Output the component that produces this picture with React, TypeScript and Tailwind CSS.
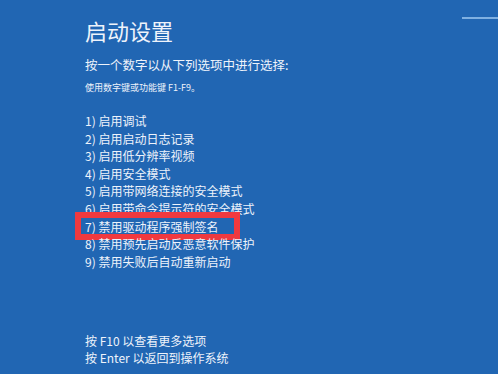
const options = [
  "1) 启用调试",
  "2) 启用启动日志记录",
  "3) 启用低分辨率视频",
  "4) 启用安全模式",
  "5) 启用带网络连接的安全模式",
  "6) 启用带命令提示符的安全模式",
  "7) 禁用驱动程序强制签名",
  "8) 禁用预先启动反恶意软件保护",
  "9) 禁用失败后自动重新启动",
];

export default function App() {
  return (
    <div
      className="relative w-[498px] h-[374px] overflow-hidden bg-[#2166b3] text-[#eef3fb]"
      style={{ fontFamily: '"Noto Sans CJK SC", "Noto Sans", sans-serif' }}
    >
      {/* faint line at top right */}
      <div className="absolute right-0 top-[17px] w-[36px] h-[2px] bg-[#7fb0e2]" />

      <div className="flex flex-col pl-[85px] pt-[17px]">
        <h1 className="text-[22px] leading-[27px] font-normal">启动设置</h1>
        <p className="mt-[12px] text-[12.5px] leading-[18px]">按一个数字以从下列选项中进行选择:</p>
        <p className="mt-[8px] text-[9px] leading-[12px]">使用数字键或功能键 F1-F9。</p>

        <ul className="mt-[18px] flex flex-col text-[12px] leading-[17.6px]">
          {options.map((o, i) => (
            <li key={i} className="relative">
              {o}
              {i === 6 && (
                <span className="absolute left-[-10px] top-[-6px] w-[165px] h-[28px] border-[6px] border-[#f0393f]" />
              )}
            </li>
          ))}
        </ul>

        <div className="mt-[62px] flex flex-col text-[12px] leading-[17px]">
          <p>按 F10 以查看更多选项</p>
          <p>按 Enter 以返回到操作系统</p>
        </div>
      </div>
    </div>
  );
}
